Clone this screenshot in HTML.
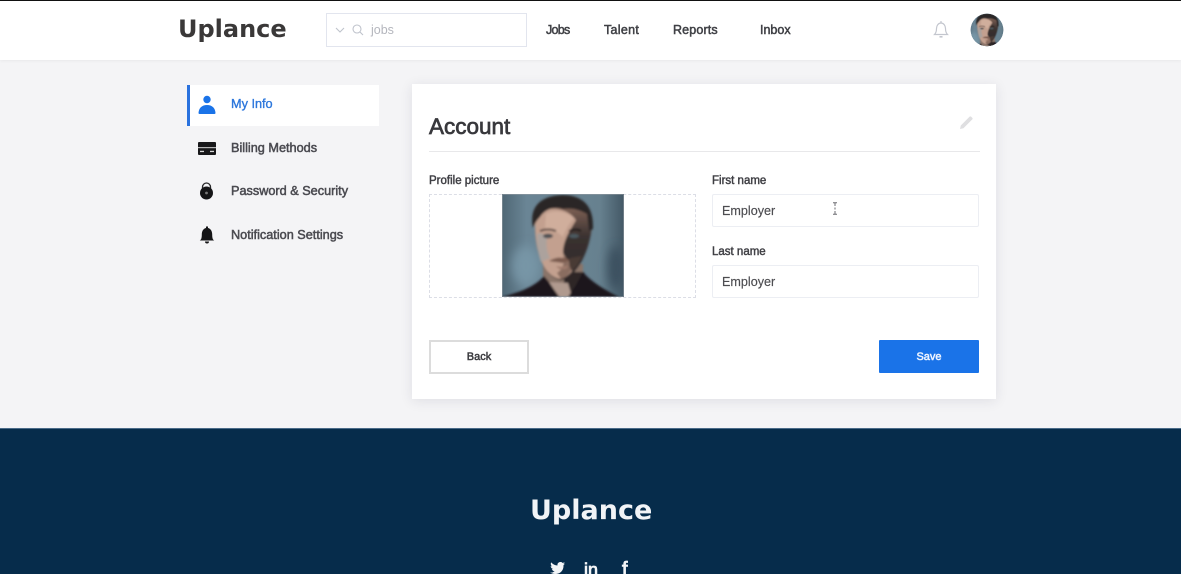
<!DOCTYPE html>
<html lang="en">
<head>
<meta charset="utf-8">
<title>Uplance - Account</title>
<style>
*{box-sizing:border-box;margin:0;padding:0}
html,body{width:1181px;height:574px;overflow:hidden}
body{position:relative;background:#f4f4f6;font-family:"Liberation Sans",sans-serif;color:#3d3d42}
.abs{position:absolute;white-space:nowrap}
#top{position:absolute;left:0;top:0;width:1181px;height:60px;background:#fff;border-top:1px solid #111;box-shadow:0 1px 3px rgba(0,0,0,.05)}
.logo{font-family:"DejaVu Sans",sans-serif;font-weight:700;font-size:24px;line-height:30px;color:#3a3838}
.nav{font-size:12.5px;line-height:16px;color:#3f4045;-webkit-text-stroke:.5px #3f4045}
#search{position:absolute;left:326px;top:13px;width:201px;height:34px;border:1px solid #e2e5ee;background:#fff}
#side-active{position:absolute;left:187px;top:85px;width:192px;height:41px;background:#fff;border-left:3px solid #2a72de}
.side{font-size:12.7px;line-height:16px;color:#4a4a50;-webkit-text-stroke:.5px #4a4a50}
#card{position:absolute;left:412px;top:84px;width:584px;height:315px;background:#fff;box-shadow:0 2px 12px rgba(40,40,70,.1)}
.lab{font-size:11.5px;line-height:14px;color:#3f3f44;-webkit-text-stroke:.45px #3f3f44}
.inp{position:absolute;left:712px;width:267px;height:33px;border:1px solid #eceef3;border-radius:2px;background:#fff;font-size:12.6px;line-height:32px;padding-left:9px;color:#4c4c50;-webkit-text-stroke:.15px #4c4c50}
#drop{position:absolute;left:429px;top:194px;width:267px;height:104px;border:1px dashed #dcdee6}
#back{position:absolute;left:429px;top:340px;width:100px;height:34px;border:2px solid #dcdcdc;background:#fff;text-align:center;font-size:11px;line-height:31px;color:#3c3c40;-webkit-text-stroke:.5px #3c3c40}
#save{position:absolute;left:879px;top:340px;width:100px;height:33px;background:#1a73e8;border-radius:1px;text-align:center;font-size:11px;line-height:34px;color:#eef4ff;-webkit-text-stroke:.5px #eef4ff}
#foot{position:absolute;left:0;top:428px;width:1181px;height:146px;background:#062c4b;border-top:1px solid #4a6a88}
</style>
</head>
<body>
<div id="top"></div>
<div class="abs logo" style="left:178px;top:14px">Uplance</div>
<div id="search">
<svg width="60" height="32" style="position:absolute;left:0;top:0" fill="none" stroke="#bfc3cc" stroke-width="1.1">
<path d="M9 14l4 4 4-4"/><circle cx="30" cy="15" r="4"/><path d="M33 18l3 3"/>
</svg>
<span class="abs" style="left:44px;top:8px;font-size:12.5px;line-height:16px;color:#b4b6bd">jobs</span>
</div>
<div class="abs nav" style="left:546px;top:22px;letter-spacing:-.7px">Jobs</div>
<div class="abs nav" style="left:604px;top:22px;letter-spacing:.3px">Talent</div>
<div class="abs nav" style="left:673px;top:22px;letter-spacing:.15px">Reports</div>
<div class="abs nav" style="left:760px;top:22px">Inbox</div>
<svg class="abs" style="left:932px;top:20px" width="18" height="19" viewBox="0 0 18 19" fill="none" stroke="#c3c6ce" stroke-width="1.2">
<path d="M2.5 14.5c1.500-1.500 2-3 2-6 0-3 2-5.500 4.500-5.500s4.500 2.500 4.500 5.500c0 3 .5 4.500 2 6z"/><path d="M9 1v2"/><path d="M7.500 16.800h3" stroke-width="1.600"/>
</svg>

<div id="side-active"></div>
<svg class="abs" style="left:197px;top:95px" width="20" height="20" viewBox="0 0 20 20" fill="#1a73e8">
<circle cx="10" cy="4.500" r="3.700"/><path d="M1.500 18c.3-5 3.500-8 8.500-8s8.200 3 8.500 8c0 .6-.5 1-1 1h-15c-.5 0-1-.4-1-1z"/>
</svg>
<div class="abs side" style="left:231px;top:96px;color:#2b76dc;-webkit-text-stroke:.35px #2b76dc">My Info</div>

<svg class="abs" style="left:198px;top:142px" width="18" height="13" viewBox="0 0 18 13">
<rect width="18" height="13" rx="1" fill="#18181a"/><rect y="5" width="18" height="1.200" fill="#b5b5b5"/><rect x="2" y="8.800" width="4" height="1.300" fill="#d8d8d8"/><rect x="12" y="8.800" width="4" height="1.300" fill="#d8d8d8"/>
</svg>
<div class="abs side" style="left:231px;top:140px">Billing Methods</div>

<svg class="abs" style="left:199px;top:182px" width="15" height="18" viewBox="0 0 15 18">
<path d="M3.500 8V5a4 4 0 0 1 8 0v3" fill="none" stroke="#28282a" stroke-width="1.300"/><circle cx="7.500" cy="11" r="6.500" fill="#151517"/><circle cx="7.500" cy="11" r="1.400" fill="#777"/>
</svg>
<div class="abs side" style="left:231px;top:183px">Password &amp; Security</div>

<svg class="abs" style="left:199px;top:226px" width="16" height="18" viewBox="0 0 16 18" fill="#151517">
<path d="M.8 14.500c1.500-1 2-2.500 2-6C2.800 5 4.500 2.500 7 2V1.200a1 1 0 0 1 2 0V2c2.500.5 4.200 3 4.200 6.500 0 3.500.5 5 2 6z"/><path d="M6 15.500h4a2 2 0 0 1-4 0z"/>
</svg>
<div class="abs side" style="left:231px;top:227px">Notification Settings</div>

<div id="card"></div>
<div class="abs" style="left:429px;top:113px;font-size:22.5px;line-height:28px;color:#38383c;-webkit-text-stroke:.7px #38383c">Account</div>
<svg class="abs" style="left:959px;top:115px" width="15" height="15" viewBox="0 0 15 15"><path d="M1 14l.8-3.500L10.500 1.800c.5-.5 1.200-.5 1.700 0l1 1c.5.500.5 1.200 0 1.700L4.500 13.200z" fill="#dfdfe1"/></svg>
<div style="position:absolute;left:429px;top:151px;width:551px;height:1px;background:#e8e8ea"></div>

<div class="abs lab" style="left:429px;top:174px">Profile picture</div>
<div id="drop"></div>
<svg class="abs" style="left:502px;top:194px" width="122" height="103" viewBox="0 0 122 103">
<defs>
<clipPath id="pc"><rect width="122" height="103"/></clipPath>
<linearGradient id="bg" x1="0" x2="1" y1="0" y2="0"><stop offset="0" stop-color="#4f6775"/><stop offset=".2" stop-color="#6a8595"/><stop offset=".8" stop-color="#67818f"/><stop offset="1" stop-color="#435866"/></linearGradient>
<linearGradient id="shade" x1="0" x2="0" y1="0" y2="1"><stop offset="0" stop-color="#7d6054"/><stop offset=".4" stop-color="#3a3130"/><stop offset="1" stop-color="#2f2829"/></linearGradient>
<filter id="b2" x="-10%" y="-10%" width="120%" height="120%"><feGaussianBlur stdDeviation="1.100"/></filter>
<filter id="b5" x="-30%" y="-30%" width="160%" height="160%"><feGaussianBlur stdDeviation="5"/></filter>
<g id="portrait">
<rect width="122" height="103" fill="url(#bg)"/>
<g filter="url(#b5)">
<ellipse cx="24" cy="72" rx="14" ry="20" fill="#7795a6"/>
<ellipse cx="114" cy="74" rx="8" ry="22" fill="#3b4f5e"/>
</g>
<g filter="url(#b2)">
<path d="M41 70h40v33H41z" fill="#8a7469"/>
<path d="M62 78h20l2 12-14 13h-8z" fill="#2e2627"/>
<path d="M46 88l12 15h12l-4-14z" fill="#b09a8f"/>
<path d="M0 103c14-4 32-9 42-21l5 6 10 15z" fill="#1e191d"/>
<path d="M81 78c8 10 24 19 36 25H66l8-12z" fill="#1e191d"/>
<path d="M33 30c0 30 9 52 25 56 14-1 29-24 32-54L84 14H38z" fill="url(#shade)"/>
<path d="M33 30c0 30 9 52 25 55 5-1 9-4 12-8 1-5-5-10-9-18 0-13 8-24 13-33-8-12-26-14-36-8z" fill="#c3a08f"/>
<path d="M44 20c8-4 20-3 28 4-5 6-9 12-11 19-6-6-12-8-18-8z" fill="#d0ae9c"/>
<path d="M35 40c3-2 8 0 10 4-1 8 0 14 3 20l-9 4c-3-8-4-18-4-28z" fill="#aca29d"/>
<path d="M61 60c4 8 9 11 8 17-3 4-6 7-10 8l-4-6c6-4 8-10 6-19z" fill="#8a6d60"/>
<path d="M68 64c-2 6 0 10 2 13 5-5 8-10 10-15z" fill="#4a3a36"/>
<path d="M31 34C27 14 37 2 60 1c21 0 32 11 31 34l-4 2-2-17c-9-5-16-6-24-5-9-3-18 0-23 8-3 3-5 6-7 11z" fill="#2b2728"/>
<path d="M38 37c5-2 11-2 16 0" stroke="#4a3b37" stroke-width="1.800" fill="none"/>
<path d="M67 37c5-2 9-2 12 0" stroke="#141214" stroke-width="1.800" fill="none"/>
<ellipse cx="46" cy="42" rx="5" ry="2.300" fill="#4d4f52"/>
<ellipse cx="72" cy="42" rx="5" ry="2" fill="#4c5a60"/>
<path d="M47 67c5-3 10-4 13-3 3-1 5 0 8 3l-8 2c-4-1-9-1-13-2z" fill="#7b5c50"/>
<path d="M54 72c4 1 9 1 13-1l-3 4-7 0z" fill="#a07c6d"/>
</g>
</g>
</defs>
<g clip-path="url(#pc)"><use href="#portrait"/></g>
<rect x=".5" y=".5" width="121" height="102" fill="none" stroke="#9aa0a6" stroke-opacity=".5"/>
</svg>
<svg class="abs" style="left:970px;top:13px" width="34" height="34" viewBox="0 0 34 34">
<defs><clipPath id="av"><circle cx="17" cy="17" r="16.300"/></clipPath></defs>
<g clip-path="url(#av)"><rect width="34" height="34" fill="#6b8594"/><use href="#portrait" transform="translate(-5 0) scale(.37)"/></g>
</svg>

<div class="abs lab" style="left:712px;top:174px">First name</div>
<div class="inp" style="top:194px">Employer</div>
<svg class="abs" style="left:832px;top:202px" width="6" height="13" viewBox="0 0 6 13" fill="none" stroke="#6b6b70" stroke-width="1"><path d="M1 .7h4M1 12.300h4M3 1v3M3 5.500v2M3 9v3"/></svg>
<div class="abs lab" style="left:712px;top:245px">Last name</div>
<div class="inp" style="top:265px">Employer</div>

<div id="back">Back</div>
<div id="save">Save</div>

<div id="foot"></div>
<div class="abs logo" style="left:530px;top:495px;font-size:27px;line-height:32px;color:#f1f4f7">Uplance</div>
<svg class="abs" style="left:550px;top:562px" width="15" height="12" viewBox="0 0 15 12" fill="#f3f5f7"><path d="M15 1.500c-.5.3-1.100.4-1.700.5.600-.4 1.100-1 1.300-1.700-.6.3-1.200.6-1.900.7A3 3 0 0 0 7.500 3.500C5 3.400 2.800 2.200 1.200.4.400 1.800.8 3.500 2.100 4.400c-.5 0-1-.2-1.400-.4 0 1.500 1 2.700 2.500 3-.5.100-.9.200-1.400.1.400 1.200 1.500 2.100 2.900 2.100A6.200 6.200 0 0 1 0 10.500C5.500 13.900 14 11.500 13.500 3c.6-.4 1.100-.9 1.500-1.500z"/></svg>
<div class="abs" style="left:584px;top:559px;font-size:18px;line-height:22px;color:#f3f5f7;-webkit-text-stroke:.8px #f3f5f7">in</div>
<div class="abs" style="left:622px;top:558px;font-size:20px;line-height:24px;color:#f3f5f7;-webkit-text-stroke:.8px #f3f5f7">f</div>
</body>
</html>
